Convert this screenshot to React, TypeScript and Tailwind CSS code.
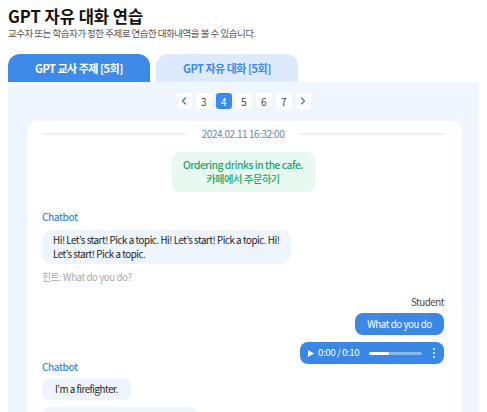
import { ChevronLeft, ChevronRight } from 'lucide-react'

const pages = [3, 4, 5, 6, 7]

function AudioBar() {
  return (
    <div className="flex items-center h-[22px] w-[144px] rounded-[8px] bg-[#3b87e6] pl-[8px] pr-[9px] text-white">
      <svg width="6" height="7" viewBox="0 0 6 7" className="mr-[4px]">
        <path d="M0 0 L6 3.5 L0 7 Z" fill="white" />
      </svg>
      <span className="text-[9.75px] leading-none">0:00 / 0:10</span>
      <div className="ml-[10px] h-[3px] w-[53px] rounded-full bg-[#8ab8f0]">
        <div className="h-[3px] w-[20px] rounded-full bg-white" />
      </div>
      <div className="ml-auto flex flex-col gap-[2px]">
        <span className="block w-[2px] h-[2px] rounded-full bg-white" />
        <span className="block w-[2px] h-[2px] rounded-full bg-white" />
        <span className="block w-[2px] h-[2px] rounded-full bg-white" />
      </div>
    </div>
  )
}

export default function App() {
  return (
    <div
      className="w-[487px] h-[412px] overflow-hidden bg-white px-2 pt-[5px] tracking-[-0.45px]"
      style={{ fontFamily: '"Noto Sans CJK KR", "Noto Sans", sans-serif' }}
    >
      <h1 className="text-[16.5px] font-bold leading-[22px] tracking-normal text-[#111]">GPT 자유 대화 연습</h1>
      <p className="text-[9.5px] leading-[13px] tracking-[-0.5px] text-[#555]">
        교수자 또는 학습자가 정한 주제로 연습한 대화내역을 볼 수 있습니다.
      </p>

      <div className="mt-[14px] flex gap-[6px]">
        <div className="flex h-[28px] w-[142px] items-center justify-center rounded-t-[12px] bg-[#3d8ae8] text-[11px] font-bold tracking-[-0.5px] text-white">
          GPT 교사 주제 [5회]
        </div>
        <div className="flex h-[28px] w-[142px] items-center justify-center rounded-t-[12px] bg-[#dceafc] text-[11px] font-bold tracking-[-0.5px] text-[#3d8ae8]">
          GPT 자유 대화 [5회]
        </div>
      </div>

      <div className="bg-[#f0f6fe] pt-[11px] h-[340px]">
        <div className="flex justify-center gap-[4px]">
          <button className="flex h-[16px] w-[15px] items-center justify-center rounded-[3px] bg-white text-[#2f6fd0]">
            <ChevronLeft size={12} strokeWidth={2.25} />
          </button>
          {pages.map((p) => (
            <button
              key={p}
              className={
                p === 4
                  ? 'flex h-[16px] w-[16px] items-center justify-center rounded-[3px] bg-[#3d8ae8] text-[10px] text-white'
                  : 'flex h-[16px] w-[16px] items-center justify-center rounded-[3px] bg-white text-[10px] text-[#444]'
              }
            >
              {p}
            </button>
          ))}
          <button className="flex h-[16px] w-[15px] items-center justify-center rounded-[3px] bg-white text-[#2f6fd0]">
            <ChevronRight size={12} strokeWidth={2.25} />
          </button>
        </div>

        <div className="mt-[12px] ml-[19px] mr-[17px] rounded-[10px] bg-white pl-[15px] pr-[18px] pt-[5px] pb-4">
          <div className="flex items-center gap-[16px]">
            <div className="h-[2px] flex-1 bg-[#edf2f8]" />
            <span className="text-[10px] text-[#6b86b3]">2024.02.11 16:32:00</span>
            <div className="h-[2px] flex-1 bg-[#edf2f8]" />
          </div>

          <div className="mt-[11px] flex justify-center">
            <div className="flex h-[40px] w-[143px] flex-col items-center justify-center rounded-[8px] bg-[#e7f9f1] text-[10.25px] font-medium leading-[14px] text-[#25a46e]">
              <span>Ordering drinks in the cafe.</span>
              <span>카페에서 주문하기</span>
            </div>
          </div>

          <div className="mt-[18px] text-[10px] font-medium leading-[14px] tracking-[-0.4px] text-[#3d8ae8]">Chatbot</div>
          <div className="mt-[6px] w-[249px] rounded-[10px] bg-[#eef5fe] px-[11px] py-[3px] text-[9.75px] leading-[14px] text-[#222]">
            Hi! Let’s start! Pick a topic. Hi! Let’s start! Pick a topic. Hi! Let’s start! Pick a topic.
          </div>
          <div className="mt-[6px] text-[9.75px] leading-[14px] text-[#aaa]">힌트: What do you do?</div>

          <div className="mt-[11px] flex flex-col items-end">
            <div className="text-[9.75px] leading-[14px] text-[#444]">Student</div>
            <div className="mt-[4px] flex h-[22px] w-[89px] items-center justify-center rounded-[8px] bg-[#3b87e6] text-[9.75px] text-white">
              What do you do
            </div>
            <div className="mt-[7px]">
              <AudioBar />
            </div>
          </div>

          <div className="mt-[-4px] text-[10px] font-medium leading-[14px] tracking-[-0.4px] text-[#3d8ae8]">Chatbot</div>
          <div className="mt-[4px] inline-flex h-[22px] w-[89px] items-center justify-center rounded-[8px] bg-[#eef5fe] text-[9.75px] text-[#222]">
            I’m a firefighter.
          </div>
          <div className="mt-[7px] h-[22px] w-[156px] rounded-[8px] bg-[#eef5fe]" />
        </div>
      </div>
    </div>
  )
}
